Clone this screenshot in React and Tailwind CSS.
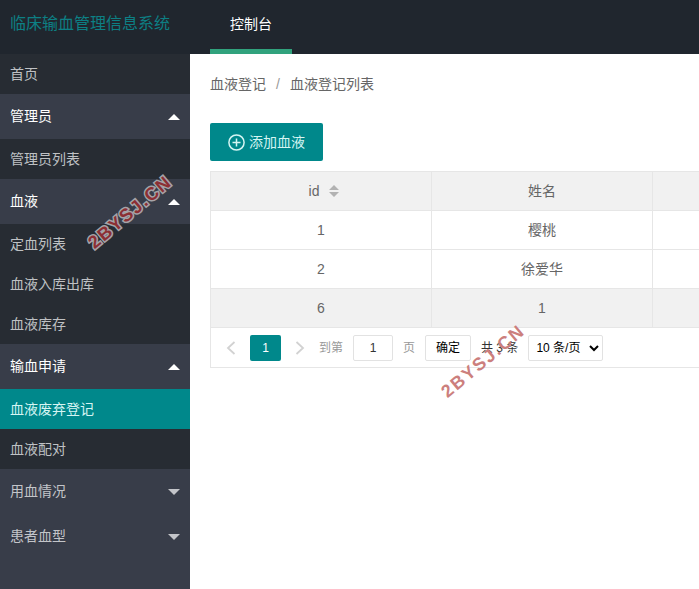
import React, { useState } from 'react';

const menu = [
  { label: '首页' },
  { label: '管理员', open: true, children: ['管理员列表'] },
  { label: '血液', open: true, children: ['定血列表', '血液入库出库', '血液库存'] },
  { label: '输血申请', open: true, children: ['血液废弃登记', '血液配对'] },
  { label: '用血情况', open: false, children: [] },
  { label: '患者血型', open: false, children: [] }
];

const rows = [
  { id: 1, name: '樱桃' },
  { id: 2, name: '徐爱华' },
  { id: 6, name: '1' }
];

const MenuLink = ({ label, active }) => (
  <a
    href="#"
    className={`flex h-10 items-center px-2.5 ${active ? 'bg-[#00888b] text-[#d5f5f3]' : 'bg-[#272c33] text-[#bfc1c4]'}`}
  >
    {label}
  </a>
);

const MenuGroup = ({ item }) => {
  const [open, setOpen] = useState(item.open);

  return (
    <div>
      <button
        type="button"
        aria-expanded={open}
        onClick={() => setOpen(!open)}
        className={`flex h-[45px] w-full items-center justify-between px-2.5 ${open ? 'text-white' : 'text-[#c3c5c9]'}`}
      >
        <span className="pb-0.5">{item.label}</span>
        <svg viewBox="0 0 12 6" className={`h-1.5 w-3 ${open ? '' : 'rotate-180'}`} fill="currentColor">
          <path d="M6 0 12 6H0z" />
        </svg>
      </button>
      {open && item.children.map((label) => (
        <MenuLink key={label} label={label} active={label === '血液废弃登记'} />
      ))}
    </div>
  );
};

const Pager = () => (
  <div className="flex h-10 items-center border-b border-[#e6e6e6] pl-[15px] text-xs text-[#333]">
    <button type="button" aria-label="上一页" className="mr-3.5 text-[#d2d2d2]">
      <svg viewBox="0 0 10 14" className="h-3.5 w-2.5" fill="none" stroke="currentColor" strokeWidth="1.8">
        <path d="M8.5 1 2 7l6.5 6" />
      </svg>
    </button>
    <button type="button" className="h-[26px] w-[31px] rounded-xs bg-[#00888b] text-white">1</button>
    <button type="button" aria-label="下一页" className="ml-3.5 mr-3.5 text-[#d2d2d2]">
      <svg viewBox="0 0 10 14" className="h-3.5 w-2.5" fill="none" stroke="currentColor" strokeWidth="1.8">
        <path d="M1.5 1 8 7l-6.5 6" />
      </svg>
    </button>
    <label className="flex items-center gap-2.5 text-[#999]">
      到第
      <input
        type="text"
        defaultValue="1"
        className="h-[26px] w-10 rounded-xs border border-[#e2e2e2] bg-white text-center text-[#333]"
      />
      页
    </label>
    <button type="button" className="mx-2.5 h-[26px] w-[46px] rounded-xs border border-[#e2e2e2] bg-white text-black">
      确定
    </button>
    <span>共 3 条</span>
    <select
      aria-label="每页条数"
      className="ml-2.5 h-[26px] w-[75px] rounded-xs border border-[#e2e2e2] bg-white pl-[3px] text-black"
    >
      <option>10 条/页</option>
      <option>20 条/页</option>
      <option>50 条/页</option>
    </select>
  </div>
);

const App = () => (
  <div className="relative flex min-h-screen flex-col overflow-hidden bg-white font-['Liberation_Sans','Noto_Sans_CJK_SC',sans-serif] text-sm text-[#666]">
    <header className="flex h-[54px] bg-[#20262e]">
      <div className="flex h-12 w-[210px] items-center pl-2.5 text-base text-[#0d7f84]">临床输血管理信息系统</div>
      <a href="#" className="flex h-full items-center border-b-5 border-[#31a27d] px-5 pb-0.5 text-white">
        控制台
      </a>
    </header>

    <div className="flex flex-1">
      <nav className="w-[190px] shrink-0 bg-[#383d49]">
        {menu.map((item) => (
          item.children
            ? <MenuGroup key={item.label} item={item} />
            : <MenuLink key={item.label} label={item.label} />
        ))}
      </nav>

      <main className="min-w-0 flex-1 pl-5 pt-5">
        <div className="flex h-5 items-center gap-2.5">
          <a href="#">血液登记</a>
          <span className="text-[#999]">/</span>
          <a href="#">血液登记列表</a>
        </div>

        <button
          type="button"
          className="mt-[29px] flex h-[38px] items-center gap-1 rounded-xs bg-[#00888b] px-[18px] text-[#d5f5f3]"
        >
          <svg viewBox="0 0 17 17" className="size-[17px]" fill="none" stroke="currentColor" strokeWidth="1.5">
            <circle cx="8.5" cy="8.5" r="7.6" />
            <path d="M8.5 4.5v8M4.5 8.5h8" />
          </svg>
          添加血液
        </button>

        <div className="mt-2.5 overflow-hidden border-l border-t border-[#e6e6e6]">
          <table className="w-[884px] table-fixed border-separate border-spacing-0 text-center">
            <thead>
              <tr className="h-[39px] bg-[#f1f1f1]">
                <th className="border-b border-r border-[#e6e6e6] pl-1.5 font-normal">
                  <span className="inline-flex items-center gap-2.5">
                    id
                    <svg viewBox="0 0 10 12" className="h-3 w-2.5" fill="#b2b2b2">
                      <path d="M5 0l5 5H0zM5 12l5-5H0z" />
                    </svg>
                  </span>
                </th>
                <th className="border-b border-r border-[#e6e6e6] font-normal">姓名</th>
                <th className="border-b border-r border-[#e6e6e6]"></th>
                <th className="border-b border-r border-[#e6e6e6]"></th>
              </tr>
            </thead>
            <tbody>
              {rows.map((row) => (
                <tr key={row.id} className={`h-[39px] ${row.id === 6 ? 'bg-[#f1f1f1]' : 'bg-white'}`}>
                  <td className="border-b border-r border-[#e6e6e6]">{row.id}</td>
                  <td className="border-b border-r border-[#e6e6e6]">{row.name}</td>
                  <td className="border-b border-r border-[#e6e6e6]"></td>
                  <td className="border-b border-r border-[#e6e6e6]"></td>
                </tr>
              ))}
            </tbody>
          </table>
          <Pager />
        </div>
      </main>
    </div>

    {/* Watermarks */}
    <div className="pointer-events-none absolute left-[70px] top-[200px] w-[120px] -rotate-40 text-center text-lg leading-6 font-bold tracking-widest whitespace-nowrap text-[#8c2f34] [-webkit-text-stroke:3px_#a5a3a8] [paint-order:stroke_fill]">
      2BYSJ.CN
    </div>
    <div className="pointer-events-none absolute left-[423px] top-[349px] w-[120px] -rotate-40 text-center text-lg leading-6 font-bold tracking-widest whitespace-nowrap text-[#cc7f7d]">
      2BYSJ.CN
    </div>
  </div>
);

export default App;
